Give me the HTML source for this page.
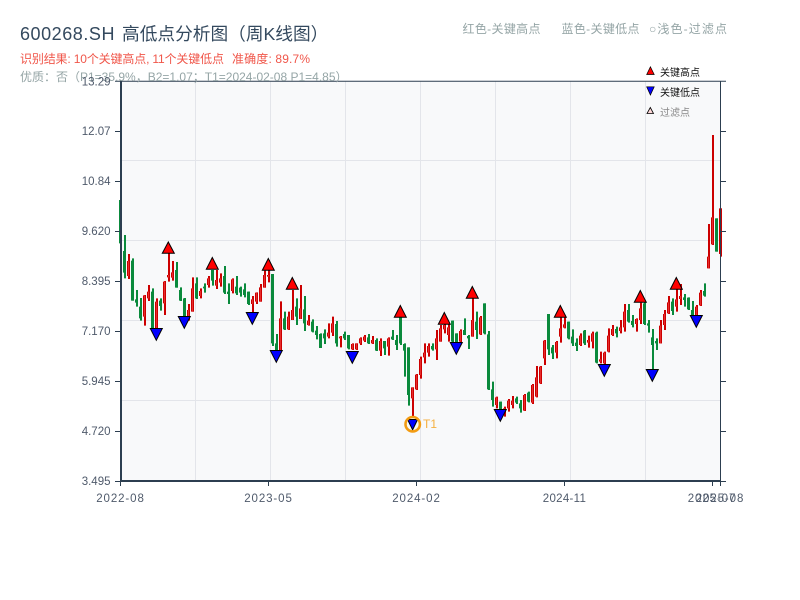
<!DOCTYPE html>
<html><head><meta charset="utf-8"><style>
html,body{margin:0;padding:0;background:#fff;width:800px;height:600px;overflow:hidden}
svg{display:block}
text{font-family:"Liberation Sans","Noto Sans CJK SC",sans-serif}
.w,.b{fill:none}
.w{stroke-width:2}
.b{stroke-width:3}
.r{stroke:#cc0000}
.g{stroke:#0a8a3c}
.yl text{font-size:11.5px;fill:#4f5a6b;text-anchor:end}
.xl text{font-size:11.5px;fill:#4f5a6b;text-anchor:middle;letter-spacing:.9px}
</style></head><body>
<svg width="800" height="600" viewBox="0 0 800 600" xmlns="http://www.w3.org/2000/svg">
<rect x="120" y="81" width="600" height="400" fill="#f8f9fa"/>
<path d="M195.5 81V480M270.5 81V480M345.5 81V480M420.5 81V480M495.5 81V480M570.5 81V480M645.5 81V480M122 160.5H720M122 240.5H720M122 320.5H720M122 400.5H720" stroke="#e3e5ea" stroke-width="1" fill="none"/>

<g transform="translate(.5,190) scale(1,.33333)">
<path class="w g" transform="translate(.5,0)" d="M120 30V160M124 135V265M132 205V332M136 300V350M140 324V392M152 295V415M160 325V362M176 216V293M180 292V333M184 324V380M196 262V327M204 280V308M212 240V287M224 228V312M228 280V342M236 258V315M240 290V320M244 280V322M248 305V345"/>
<path class="b g" d="M120 30V160M124 183V248M132 212V332M136 328V338M140 350V385M152 305V415M160 332V348M176 240V293M180 300V332M184 325V380M196 280V325M204 290V295M212 240V272M224 258V308M228 305V312M236 290V310M240 293V308M244 298V315M248 305V342"/>
<path class="w r" transform="translate(.5,0)" d="M128 192V267M144 315V407M148 285V333M156 325V415M164 273V375M168 190V275M172 213V272M188 342V392M192 262V365M200 295V325M208 258V293M216 240V297M220 250V290M232 265V310M252 318V367M256 307V342M260 282V335M264 242V293M268 210V277"/>
<g stroke="#cc0000" stroke-width="3" fill="none"><path id="ra" d="M128 213V258M144 316V380M148 305V325M156 335V415M164 275V340M168 255V262M172 247V263M188 360V380M192 295V365M200 303V318M208 265V285M216 270V287M220 265V278M232 268V303M252 328V342M256 308V335M260 292V335M264 255V293M268 255V260"/></g>
<use href="#ra" stroke="#e62e2e" stroke-width="1" fill="none"/>
</g>

<g transform="translate(.5,260) scale(1,.33333)">
<path class="w g" transform="translate(.5,0)" d="M272 42V258M276 222V270M284 155V210M296 115V195M304 108V213M312 178V217M316 198V238M320 220V264M324 208V252M336 183V260M344 215V240M348 225V268M368 222V252M376 235V273M384 243V285M392 210V240M396 225V270M400 172V255M404 250V350M408 262V437"/>
<path class="b g" d="M272 42V250M276 250V270M284 175V208M296 140V170M304 148V190M312 185V215M316 212V225M320 222V264M324 220V235M336 192V250M344 222V235M348 225V265M368 232V250M376 240V272M384 243V265M392 230V238M396 240V255M400 172V250M404 252V272M408 262V405"/>
<path class="w r" transform="translate(.5,0)" d="M280 124V270M288 155V210M292 90V180M300 75V177M308 165V197M328 190V235M332 170V228M340 228V262M352 250V270M356 250V270M360 232V255M364 225V246M372 228V252M380 235V288M388 232V287M412 382V470M416 342V390M420 290V356M424 250V310M428 250V290"/>
<g stroke="#cc0000" stroke-width="3" fill="none"><path id="rb" d="M280 175V270M288 170V208M292 150V180M300 145V177M308 182V195M328 218V230M332 190V218M340 230V235M352 252V268M356 250V268M360 235V250M364 230V242M372 240V250M380 243V272M388 235V260M412 382V415M416 344V388M420 297V345M424 278V292M428 258V278"/></g>
<use href="#rb" stroke="#e62e2e" stroke-width="1" fill="none"/>
</g>

<g transform="translate(.5,270) scale(1,.33333)">
<path class="w g" transform="translate(.5,0)" d="M432 220V242M452 152V218M456 190V216M464 145V195M468 195V237M476 125V207M484 100V193M488 183V360M492 335V410M500 395V418M516 380V402M520 390V428M528 365V397M548 132V255M552 225V267M568 155V208M572 178V228M576 205V243M584 180V225"/>
<path class="b g" d="M432 228V238M452 152V215M456 190V216M464 180V195M468 198V205M476 155V180M484 100V190M488 193V358M492 358V390M500 395V418M516 385V398M520 400V415M528 368V395M548 132V238M552 232V250M568 155V205M572 200V220M576 218V228M584 182V220"/>
<path class="w r" transform="translate(.5,0)" d="M436 180V270M440 165V215M444 160V190M448 160V215M460 178V220M472 85V200M480 138V195M496 380V415M504 410V440M508 387V425M512 378V415M524 372V423M532 342V402M536 288V382M540 288V342M544 210V285M556 213V265M560 140V218M564 140V175M580 190V228M588 197V233"/>
<g stroke="#cc0000" stroke-width="3" fill="none"><path id="rc" d="M436 205V238M440 175V215M444 165V178M448 172V195M460 183V215M472 150V200M480 142V193M496 382V405M504 415V425M508 392V415M512 392V405M524 375V422M532 345V398M536 322V380M540 290V340M544 212V265M556 216V248M560 175V200M564 163V173M580 197V225M588 210V218"/></g>
<use href="#rc" stroke="#e62e2e" stroke-width="1" fill="none"/>
</g>

<g transform="translate(.5,130) scale(1,.33333)">
<path class="w g" transform="translate(.5,0)" d="M596 605V700M616 590V622M628 522V578M632 555V592M644 515V585M648 570V608M652 597V718M656 625V660M672 505V555M684 492V530M688 502V540M692 513V557M704 460V500M716 265V365"/>
<path class="b g" d="M596 608V698M616 597V610M628 540V575M632 573V585M644 520V582M648 580V587M652 622V645M656 633V640M672 515V543M684 502V510M688 503V538M692 540V555M704 483V497M716 265V365"/>
<path class="w r" transform="translate(.5,0)" d="M592 605V655M600 665V700M604 665V705M608 595V667M612 585V618M620 570V610M624 522V605M636 565V605M640 518V582M660 570V640M664 540V600M668 498V552M676 475V545M680 462V525M696 525V555M700 480V528M708 282V415M712 15V345M720 235V380"/>
<g stroke="#cc0000" stroke-width="3" fill="none"><path id="rd" d="M592 610V635M600 688V695M604 668V700M608 617V665M612 597V615M620 592V603M624 545V592M636 567V582M640 535V570M660 587V640M664 552V585M668 517V550M676 508V530M680 498V507M696 530V555M700 488V526M708 380V415M712 262V343M720 235V372"/></g>
<use href="#rd" stroke="#e62e2e" stroke-width="1" fill="none"/>
</g>

<g fill="#ff0000" stroke="#000" stroke-width="1" stroke-linejoin="miter">
<path d="M168.3 242L174.3 253.3H162.3Z"/>
<path d="M212.3 257.5L218.3 269.3H206.3Z"/>
<path d="M268.3 258.5L274.3 270.3H262.3Z"/>
<path d="M292.3 277.5L298.3 289.3H286.3Z"/>
<path d="M400.3 305.5L406.3 317.3H394.3Z"/>
<path d="M444.3 312.5L450.3 324.3H438.3Z"/>
<path d="M472.3 286.5L478.3 298.3H466.3Z"/>
<path d="M560.3 305.5L566.3 317.3H554.3Z"/>
<path d="M640.3 290.5L646.3 302.3H634.3Z"/>
<path d="M676.3 277.5L682.3 289.3H670.3Z"/>
</g>
<g fill="#0000ff" stroke="#000" stroke-width="1" stroke-linejoin="miter">
<path d="M150.3 328.5H162.3L156.3 340.3Z"/>
<path d="M178.3 316.5H190.3L184.3 328.3Z"/>
<path d="M246.3 312.5H258.3L252.3 324.3Z"/>
<path d="M270.3 350.5H282.3L276.3 362.3Z"/>
<path d="M346.3 351.5H358.3L352.3 363.3Z"/>
<path d="M407.6 419.5H417.6L412.6 429.8Z"/>
<path d="M450.3 342.5H462.3L456.3 354.3Z"/>
<path d="M494.3 409.5H506.3L500.3 421.3Z"/>
<path d="M598.3 364.5H610.3L604.3 376.3Z"/>
<path d="M646.3 369.5H658.3L652.3 381.3Z"/>
<path d="M690.3 315.5H702.3L696.3 327.3Z"/>
</g>
<circle cx="412.7" cy="424.2" r="7.2" fill="none" stroke="#f39c12" stroke-width="2.6"/>
<text x="423" y="428" font-size="12" fill="#f5b041">T1</text>

<path d="M115 81H726" stroke="#2c3e50" stroke-width="1" fill="none" transform="translate(0,.3)"/>
<path d="M121 80.5V482" stroke="#2c3e50" stroke-width="2" fill="none"/>
<path d="M120 481H720" stroke="#2c3e50" stroke-width="2" fill="none"/>
<path d="M720.5 81V486" stroke="#2c3e50" stroke-width="1" fill="none"/>
<path d="M115 131.5H120M115 181.5H120M115 231.5H120M115 281.5H120M115 331.5H120M115 381.5H120M115 431.5H120M115 481.5H120M720 131.5H726M720 181.5H726M720 231.5H726M720 281.5H726M720 331.5H726M720 381.5H726M720 431.5H726M720 481.5H726M120.5 481V486M268.5 481V486M416.5 481V486M564.5 481V486M712.5 481V486" stroke="#2c3e50" stroke-width="1" fill="none"/>

<text x="20" y="40" font-size="18" fill="#34495e" letter-spacing=".55">600268.SH</text>
<text x="122" y="40" font-size="17.7" fill="#34495e">高低点分析图（周K线图）</text>
<text x="20" y="63" font-size="12" fill="#f0564a" textLength="204">识别结果: 10个关键高点, 11个关键低点</text>
<text x="232" y="63" font-size="12" fill="#f0564a" textLength="78">准确度: 89.7%</text>
<text x="20" y="81" font-size="12" fill="#95a5a6">优质：否（P1=35.9%，B2=1.07；T1=2024-02-08 P1=4.85）</text>
<text x="462.5" y="33" font-size="12" fill="#95a5a6" textLength="78">红色-关键高点</text>
<text x="561.5" y="33" font-size="12" fill="#95a5a6" textLength="78">蓝色-关键低点</text>
<text x="649" y="33" font-size="12" fill="#95a5a6" textLength="78">○浅色-过滤点</text>

<path d="M650.4 66.8L654.2 74.5H646.7Z" fill="#ff0000" stroke="#000" stroke-width=".7"/>
<path d="M646.7 86.8H654.2L650.4 95Z" fill="#0000ff" stroke="#000" stroke-width=".7"/>
<path d="M650.3 107.5L653.5 113.5H647Z" fill="#ffd9d9" stroke="#000" stroke-width=".8"/>
<text x="660" y="76" font-size="10" fill="#111">关键高点</text>
<text x="660" y="96" font-size="10" fill="#111">关键低点</text>
<text x="660" y="116" font-size="10" fill="#888">过滤点</text>

<g class="yl">
<text x="110.5" y="85.5">13.29</text>
<text x="110.5" y="135">12.07</text>
<text x="110.5" y="185">10.84</text>
<text x="110.5" y="235">9.620</text>
<text x="110.5" y="285">8.395</text>
<text x="110.5" y="335">7.170</text>
<text x="110.5" y="385">5.945</text>
<text x="110.5" y="435">4.720</text>
<text x="110.5" y="485">3.495</text>
</g>
<g class="xl">
<text x="120.5" y="502">2022-08</text>
<text x="268.5" y="502">2023-05</text>
<text x="416.5" y="502">2024-02</text>
<text x="564.5" y="502" style="letter-spacing:.3px">2024-11</text>
<text x="712" y="502">2025-07</text>
<text x="720" y="502">2025-08</text>
</g>
</svg>
</body></html>
